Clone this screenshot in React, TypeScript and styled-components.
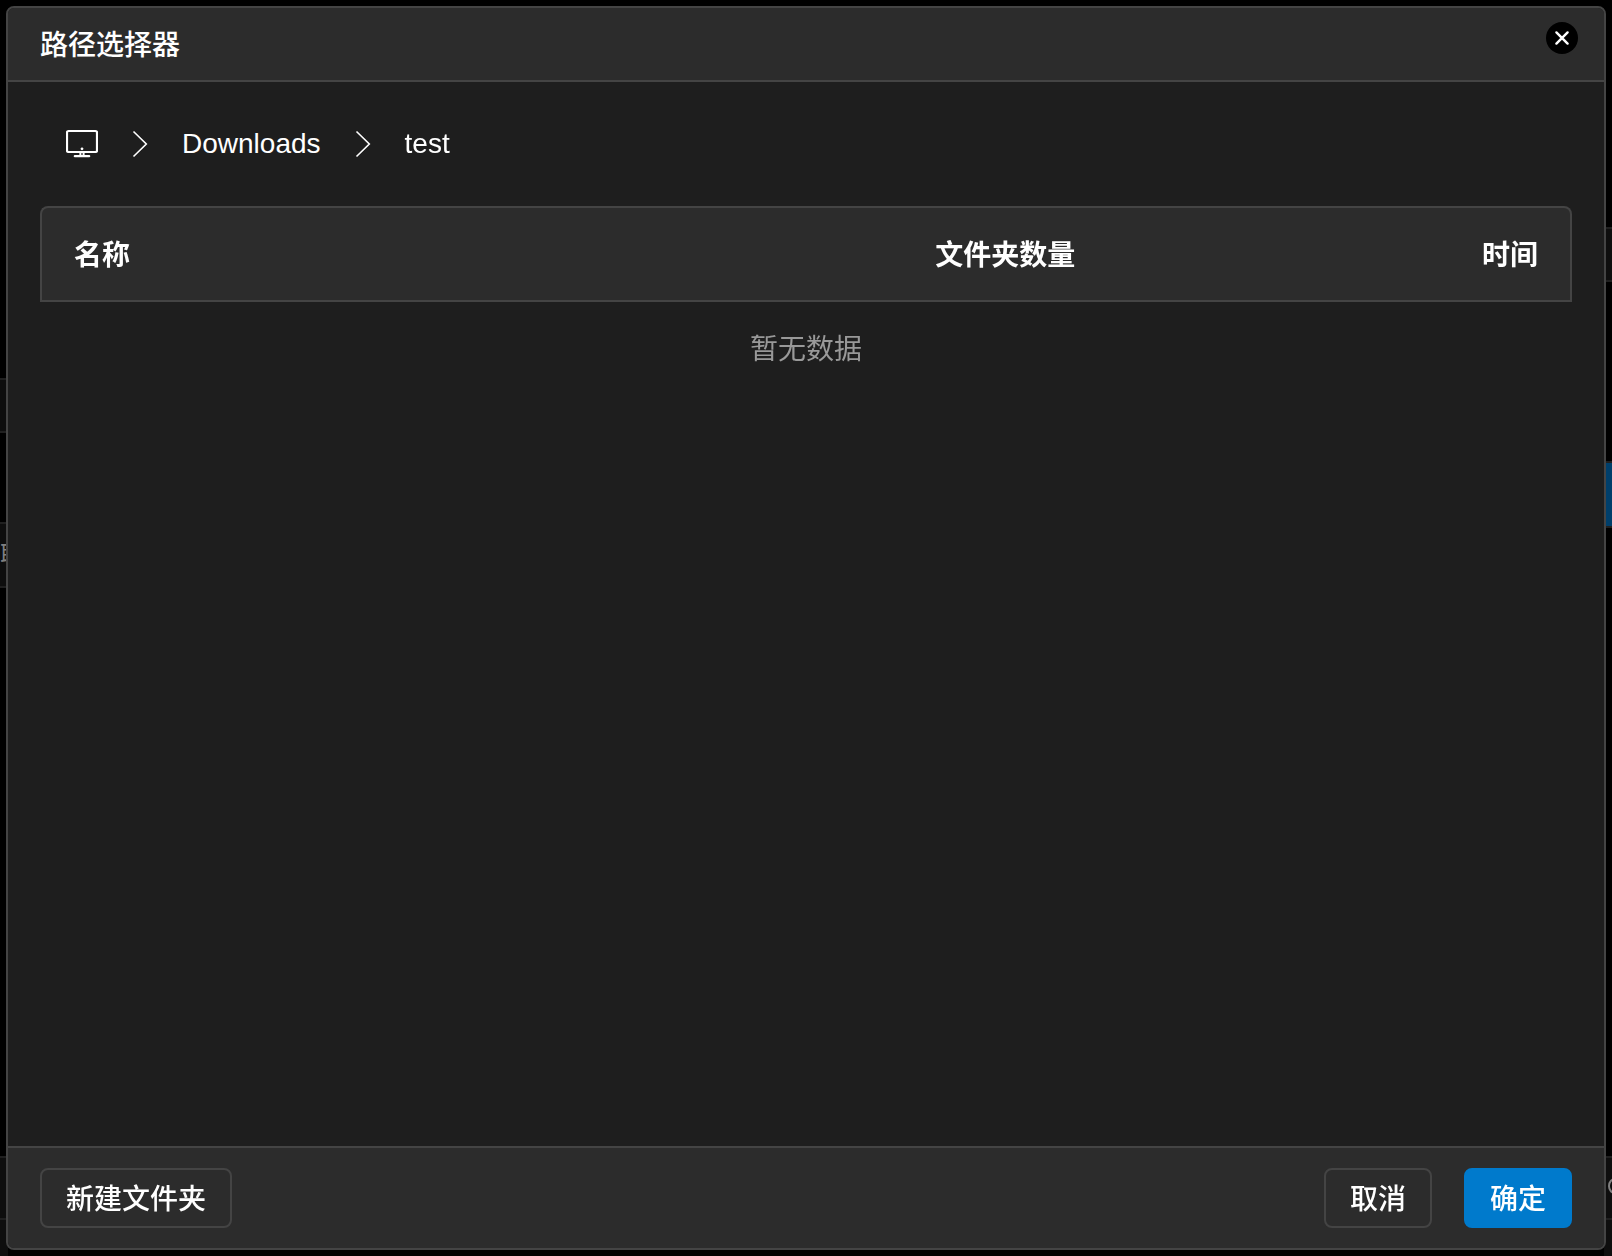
import React from "react";
import styled, { createGlobalStyle } from "styled-components";

const color = {
  line: "#444444",
  bar: "#2c2c2c",
  panel: "#1e1e1e",
  text: "#ffffff",
  muted: "#999999",
  primary: "#007acc",
};

const GlobalStyle = createGlobalStyle`
  * { box-sizing: border-box; }
  body {
    margin: 0;
    background: #000;
    color: ${color.text};
    font-family: "Liberation Sans", "Noto Sans CJK SC", sans-serif;
    font-size: 28px;
    line-height: 40px;
    overflow: hidden;
  }
`;

const Page = styled.div`
  display: flex;
  justify-content: space-between;
  height: 100vh;
`;

const Edge = styled.div`
  display: flex;
  flex-direction: column;
  width: 8px;
`;

const Gap = styled.div<{ $size: number }>`
  flex: 0 0 ${(p) => p.$size}px;
`;

const Field = styled.div<{ $size: number; $fill?: string }>`
  flex: 0 0 ${(p) => p.$size}px;
  display: flex;
  align-items: center;
  border: solid #202020;
  border-width: 2px 0;
  background: ${(p) => p.$fill ?? "#0e0e0e"};
  color: #808080;
  font-size: 24px;
  white-space: nowrap;
`;

const Rest = styled.div`
  flex: 1;
  background: #0e0e0e;
`;

const Ring = styled.span`
  flex: none;
  width: 14px;
  height: 16px;
  margin: 0 0 4px 4px;
  border: 2px solid #808080;
  border-radius: 50%;
`;

const Overlay = styled.div`
  position: fixed;
  inset: 0;
  display: flex;
  padding: 6px;
`;

const Dialog = styled.section`
  flex: 1;
  display: flex;
  flex-direction: column;
  border: 2px solid ${color.line};
  border-radius: 8px;
  background: ${color.panel};
  overflow: hidden;
`;

const Header = styled.header`
  display: flex;
  justify-content: space-between;
  align-items: flex-start;
  padding: 14px 26px 14px 32px;
  border-bottom: 2px solid ${color.line};
  background: ${color.bar};
`;

const Title = styled.h1`
  margin: 0;
  padding-top: 4px;
  font-size: 28px;
  line-height: 40px;
  font-weight: 500;
`;

const CloseButton = styled.button`
  display: grid;
  place-items: center;
  width: 32px;
  height: 32px;
  padding: 0;
  border: 0;
  border-radius: 50%;
  background: #000;
  color: ${color.text};
`;

const Body = styled.main`
  flex: 1;
  padding: 32px;
`;

const Crumbs = styled.nav`
  display: flex;
  align-items: center;
  gap: 32px;
  height: 60px;
  margin-bottom: 32px;
  padding: 0 26px;
`;

const Crumb = styled.a`
  display: flex;
  color: ${color.text};
  text-decoration: none;
`;

const Table = styled.table`
  width: 100%;
  table-layout: fixed;
  border-collapse: separate;
  border-spacing: 0;
`;

const HeadCell = styled.th<{ $width: string; $align: "left" | "center" | "right" }>`
  width: ${(p) => p.$width};
  height: 96px;
  padding: 4px 32px 0;
  border: solid ${color.line};
  border-width: 2px 0;
  background: ${color.bar};
  font-weight: 700;
  text-align: ${(p) => p.$align};

  &:first-child {
    border-left-width: 2px;
    border-top-left-radius: 8px;
  }
  &:last-child {
    border-right-width: 2px;
    border-top-right-radius: 8px;
  }
`;

const EmptyCell = styled.td`
  height: 92px;
  padding: 4px 0 0;
  color: ${color.muted};
  text-align: center;
`;

const Footer = styled.footer`
  display: flex;
  gap: 32px;
  padding: 20px 32px;
  border-top: 2px solid ${color.line};
  background: ${color.bar};
`;

const Button = styled.button<{ $primary?: boolean; $pushNext?: boolean }>`
  height: 60px;
  padding: 4px 24px 0;
  margin-right: ${(p) => (p.$pushNext ? "auto" : "0")};
  border: 2px solid ${(p) => (p.$primary ? color.primary : color.line)};
  border-radius: 8px;
  background: ${(p) => (p.$primary ? color.primary : "transparent")};
  color: ${color.text};
  font: inherit;
  font-weight: 500;
`;

const MonitorIcon = () => (
  <svg width="32" height="32" viewBox="0 0 32 32" fill="none" stroke="currentColor" strokeWidth="2" aria-hidden="true">
    <rect x="1" y="3" width="30" height="21" rx="1.5" strokeWidth="2.2" />
    <path d="M8.8 28.2h14.4" strokeWidth="2.2" strokeLinecap="round" />
    <path d="M14.4 24v4M17.6 24v4" />
    <circle cx="16" cy="20.8" r="1.4" fill="currentColor" stroke="none" />
  </svg>
);

const ChevronIcon = () => (
  <svg width="20" height="28" viewBox="0 0 20 28" fill="none" stroke="currentColor" strokeWidth="1.6" aria-hidden="true">
    <path d="M3.5 1.5L16.3 14L3.5 26.5" />
  </svg>
);

const CloseIcon = () => (
  <svg width="16" height="16" viewBox="0 0 16 16" stroke="currentColor" strokeWidth="2.4" strokeLinecap="round" aria-hidden="true">
    <path d="M2.4 2.4L13.6 13.6M13.6 2.4L2.4 13.6" />
  </svg>
);

export default function App() {
  return (
    <>
      <GlobalStyle />
      <Page aria-hidden="true">
        <Edge>
          <Gap $size={378} />
          <Field $size={55} />
          <Gap $size={89} />
          <Field $size={66}>取</Field>
          <Gap $size={568} />
          <Field $size={64} />
          <Rest />
        </Edge>
        <Edge>
          <Gap $size={227} />
          <Field $size={55} />
          <Gap $size={179} />
          <Field $size={67} $fill="#003f6b" />
          <Gap $size={628} />
          <Field $size={64}><Ring /></Field>
          <Rest />
        </Edge>
      </Page>
      <Overlay>
        <Dialog role="dialog" aria-labelledby="picker-title">
          <Header>
            <Title id="picker-title">路径选择器</Title>
            <CloseButton type="button" aria-label="关闭">
              <CloseIcon />
            </CloseButton>
          </Header>
          <Body>
            <Crumbs>
              <Crumb href="#" aria-label="根目录"><MonitorIcon /></Crumb>
              <ChevronIcon />
              <Crumb href="#downloads">Downloads</Crumb>
              <ChevronIcon />
              <Crumb href="#test">test</Crumb>
            </Crumbs>
            <Table>
              <thead>
                <tr>
                  <HeadCell $width="50%" $align="left">名称</HeadCell>
                  <HeadCell $width="26%" $align="center">文件夹数量</HeadCell>
                  <HeadCell $width="24%" $align="right">时间</HeadCell>
                </tr>
              </thead>
              <tbody>
                <tr>
                  <EmptyCell colSpan={3}>暂无数据</EmptyCell>
                </tr>
              </tbody>
            </Table>
          </Body>
          <Footer>
            <Button type="button" $pushNext>新建文件夹</Button>
            <Button type="button">取消</Button>
            <Button type="button" $primary>确定</Button>
          </Footer>
        </Dialog>
      </Overlay>
    </>
  );
}
